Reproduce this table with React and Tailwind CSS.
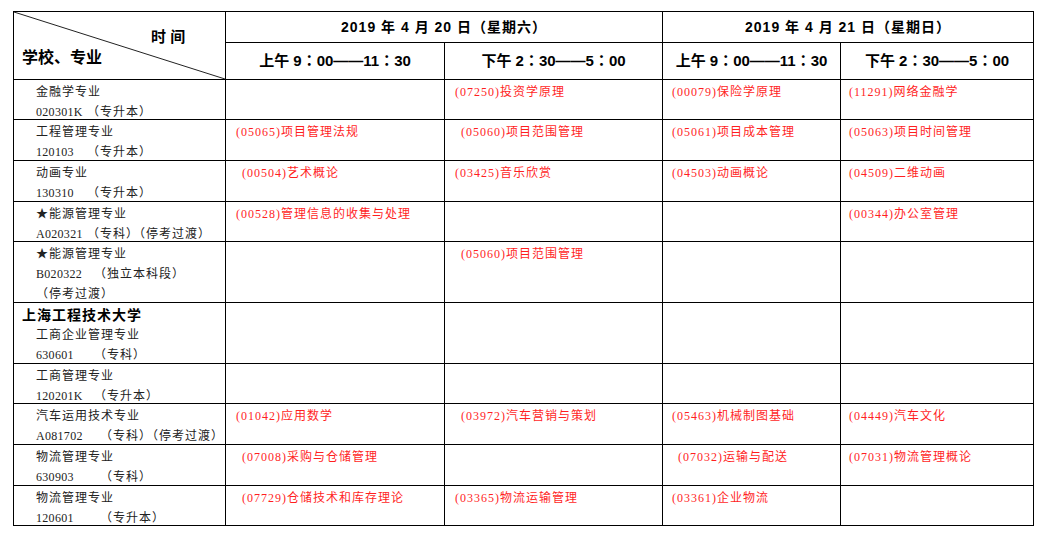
import React from "react";

const rows = [
  {
    h: "h-[39px]",
    lines: [["金融学专业"], ["020301K", "（专升本）", "w-[51px]"]],
    cells: ["", "(07250)投资学原理", "(00079)保险学原理", "(11291)网络金融学"],
  },
  {
    h: "h-[40px]",
    lines: [["工程管理专业"], ["120103", "（专升本）", "w-[51px]"]],
    cells: ["(05065)项目管理法规", " (05060)项目范围管理", "(05061)项目成本管理", "(05063)项目时间管理"],
  },
  {
    h: "h-[40px]",
    lines: [["动画专业"], ["130310", "（专升本）", "w-[51px]"]],
    cells: [" (00504)艺术概论", "(03425)音乐欣赏", "(04503)动画概论", "(04509)二维动画"],
  },
  {
    h: "h-[39px]",
    lines: [["★能源管理专业"], ["A020321", "（专科）（停考过渡）", "w-[51px]"]],
    cells: ["(00528)管理信息的收集与处理", "", "", "(00344)办公室管理"],
  },
  {
    h: "h-[60px]",
    lines: [["★能源管理专业"], ["B020322", "（独立本科段）", "w-[58px]"], ["（停考过渡）"]],
    cells: ["", " (05060)项目范围管理", "", ""],
  },
  {
    h: "h-[60px]",
    school: "上海工程技术大学",
    lines: [["工商企业管理专业"], ["630601", "（专科）", "w-[58px]"]],
    cells: ["", "", "", ""],
  },
  {
    h: "h-[39px]",
    lines: [["工商管理专业"], ["120201K", "（专升本）", "w-[58px]"]],
    cells: ["", "", "", ""],
  },
  {
    h: "h-[40px]",
    lines: [["汽车运用技术专业"], ["A081702", "（专科）（停考过渡）", "w-[64px]"]],
    cells: ["(01042)应用数学", " (03972)汽车营销与策划", "(05463)机械制图基础", "(04449)汽车文化"],
  },
  {
    h: "h-[40px]",
    lines: [["物流管理专业"], ["630903", "（专科）", "w-[64px]"]],
    cells: [" (07008)采购与仓储管理", "", " (07032)运输与配送", "(07031)物流管理概论"],
  },
  {
    h: "h-[39px]",
    lines: [["物流管理专业"], ["120601", "（专升本）", "w-[64px]"]],
    cells: [" (07729)仓储技术和库存理论", "(03365)物流运输管理", "(03361)企业物流", ""],
  },
];

const pads = ["pl-[10px]", "pl-[10px]", "pl-[9px]", "pl-[8px]"];

function Course({ text }) {
  if (!text) return null;
  const indent = text.startsWith(" ");
  return <div className={indent ? "pl-[6px]" : ""}>{text.trim()}</div>;
}

export default function App() {
  return (
    <div className="w-[1046px] h-[536px] bg-white pt-[11px] pl-[13px]">
      <table className="table-fixed border-collapse w-[1020px] font-['Liberation_Serif','Noto_Sans_CJK_SC',serif] text-[12px] tracking-[1px]">
        <colgroup>
          <col className="w-[212px]" />
          <col className="w-[219px]" />
          <col className="w-[218px]" />
          <col className="w-[178px]" />
          <col className="w-[193px]" />
        </colgroup>
        <thead className="font-['Liberation_Sans','Noto_Sans_CJK_SC',sans-serif] font-bold text-black">
          <tr className="h-[31px]">
            <th rowSpan={2} className="relative border border-black p-0 align-top text-left font-bold">
              <svg className="absolute inset-0 w-full h-full" preserveAspectRatio="none" viewBox="0 0 100 100">
                <line x1="0" y1="0" x2="100" y2="100" stroke="#222" strokeWidth="1" vectorEffect="non-scaling-stroke" />
              </svg>
              <div className="flex flex-col pt-[16px]">
                <div className="pl-[137px] text-[15px] leading-[18px] tracking-normal">时 间</div>
                <div className="pl-[8px] mt-[3px] text-[16px] leading-[18px] tracking-normal">学校、专业</div>
              </div>
            </th>
            <th colSpan={2} className="border border-black text-[14px] font-bold align-middle">
              2019 年 4 月 20 日（星期六）
            </th>
            <th colSpan={2} className="border border-black text-[14px] font-bold align-middle">
              2019 年 4 月 21 日（星期日）
            </th>
          </tr>
          <tr className="h-[37px] text-[15px] tracking-normal font-['Liberation_Sans','Noto_Sans_CJK_TC',sans-serif]">
            <th className="border border-black font-bold">上午 9：00——11：30</th>
            <th className="border border-black font-bold">下午 2：30——5：00</th>
            <th className="border border-black font-bold">上午 9：00——11：30</th>
            <th className="border border-black font-bold">下午 2：30——5：00</th>
          </tr>
        </thead>
        <tbody>
          {rows.map((r, i) => (
            <tr key={i}>
              <td className="border border-black align-top p-0 text-[#222]">
                <div className={"pl-[8px] pt-[2px] leading-[20px] " + r.h}>
                  {r.school && (
                    <div className="font-['Liberation_Sans','Noto_Sans_CJK_SC',sans-serif] font-bold text-[14px] text-black">
                      {r.school}
                    </div>
                  )}
                  {r.lines.map((l, j) => (
                    <div key={j} className="pl-[14px] flex whitespace-nowrap">
                      {l.length > 1 ? (
                        <>
                          <span className={"shrink-0 tracking-[0.3px] " + l[2]}>{l[0]}</span>
                          <span>{l[1]}</span>
                        </>
                      ) : (
                        l[0]
                      )}
                    </div>
                  ))}
                </div>
              </td>
              {r.cells.map((c, k) => (
                <td
                  key={k}
                  className="border border-black align-top p-0 text-[#ff1f1f] whitespace-nowrap"
                >
                  <div className={"pt-[2px] leading-[20px] " + pads[k] + " " + r.h}>
                    <Course text={c} />
                  </div>
                </td>
              ))}
            </tr>
          ))}
        </tbody>
      </table>
    </div>
  );
}
